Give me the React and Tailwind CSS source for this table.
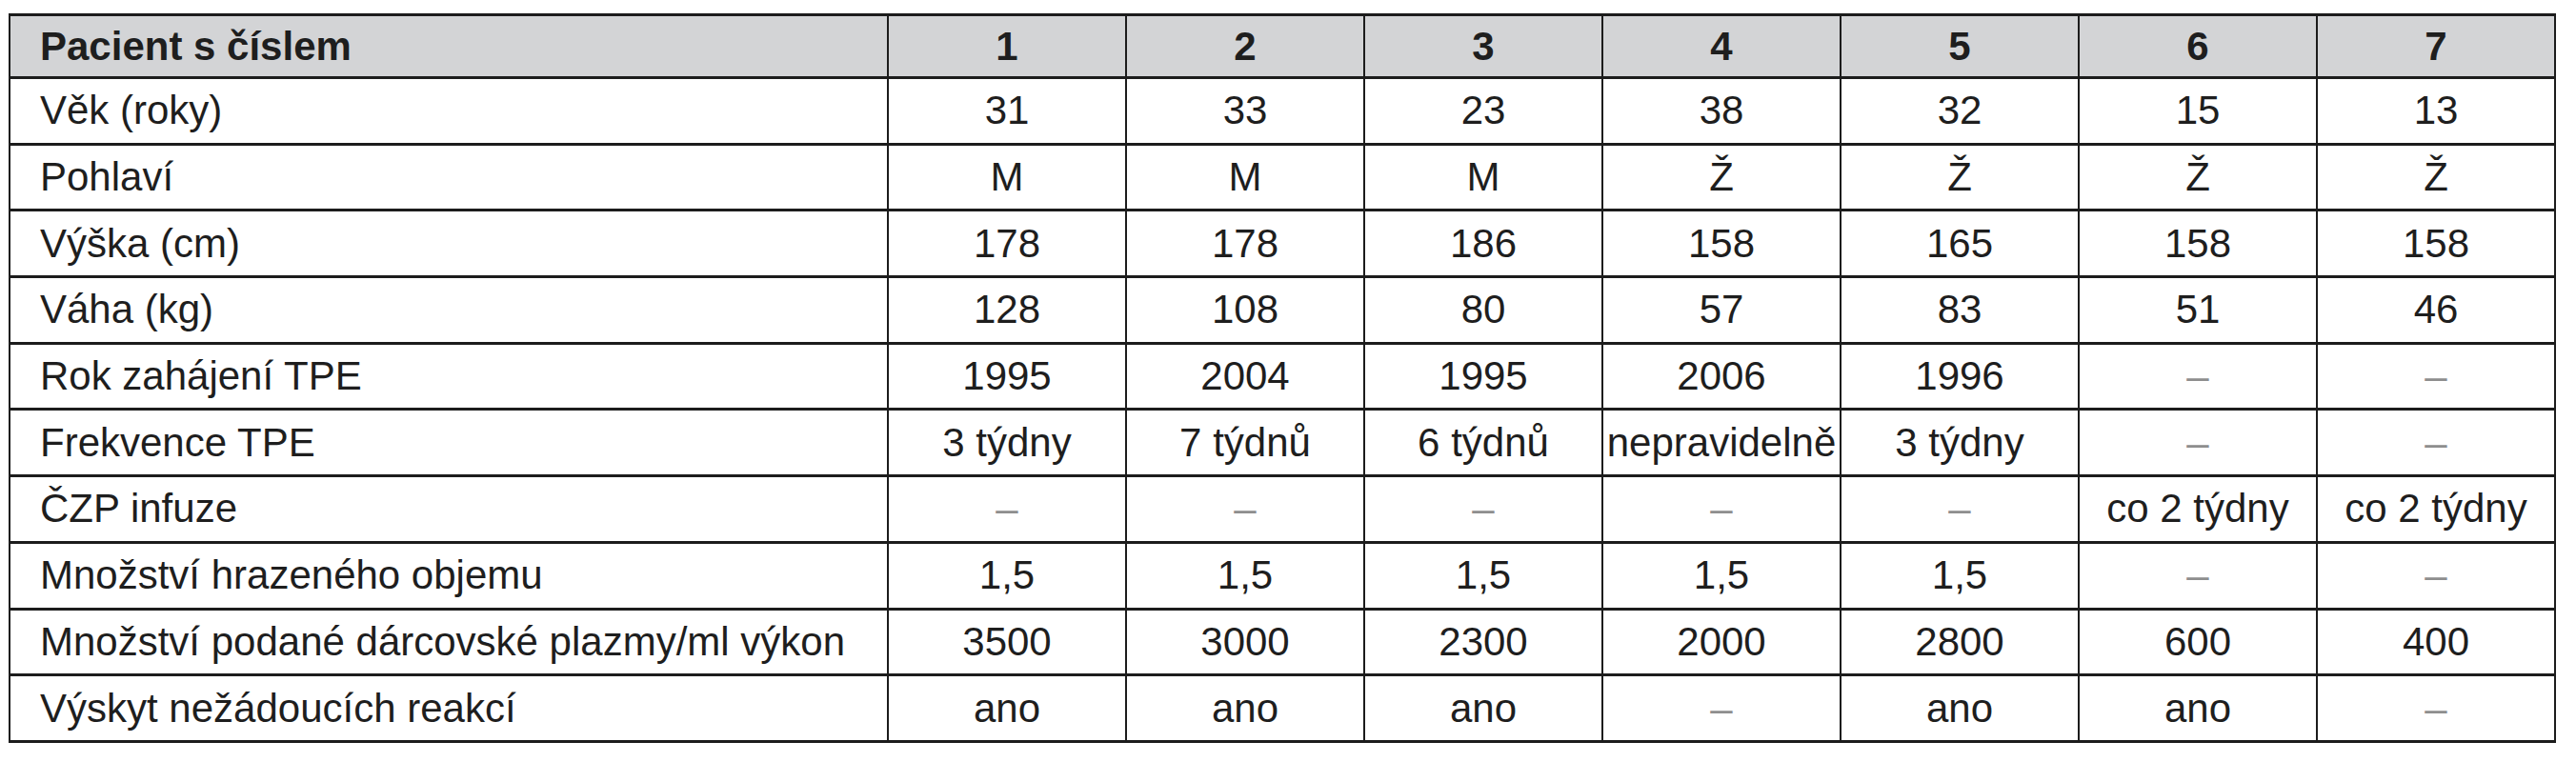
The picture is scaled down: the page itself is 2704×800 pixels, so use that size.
import React from "react";

const header = ["Pacient s číslem", "1", "2", "3", "4", "5", "6", "7"];

const rows = [
  ["Věk (roky)", "31", "33", "23", "38", "32", "15", "13"],
  ["Pohlaví", "M", "M", "M", "Ž", "Ž", "Ž", "Ž"],
  ["Výška (cm)", "178", "178", "186", "158", "165", "158", "158"],
  ["Váha (kg)", "128", "108", "80", "57", "83", "51", "46"],
  ["Rok zahájení TPE", "1995", "2004", "1995", "2006", "1996", "–", "–"],
  ["Frekvence TPE", "3 týdny", "7 týdnů", "6 týdnů", "nepravidelně", "3 týdny", "–", "–"],
  ["ČZP infuze", "–", "–", "–", "–", "–", "co 2 týdny", "co 2 týdny"],
  ["Množství hrazeného objemu", "1,5", "1,5", "1,5", "1,5", "1,5", "–", "–"],
  ["Množství podané dárcovské plazmy/ml výkon", "3500", "3000", "2300", "2000", "2800", "600", "400"],
  ["Výskyt nežádoucích reakcí", "ano", "ano", "ano", "–", "ano", "ano", "–"],
];

function Cell({ children, first, head }) {
  const isDash = children === "–";
  return (
    <div
      className={
        "flex items-center whitespace-nowrap border-r-2 border-b-[3px] border-[#1c1c1c] " +
        (head ? "h-[66px] bg-[#d3d4d6] font-bold " : "h-[69.7px] bg-white ") +
        (first ? "justify-start pl-[31px] " : "justify-center ") +
        (isDash ? "text-[#8e8e8e]" : "text-[#1e1e1e]")
      }
    >
      {children}
    </div>
  );
}

export default function App() {
  return (
    <div className="min-h-[800px] w-[2704px] bg-white pt-[14px] pl-[9px] font-['Liberation_Sans',Arial,sans-serif] text-[42px] leading-none">
      <div className="grid w-fit grid-cols-[922px_repeat(7,250px)] border-l-2 border-t-[3px] border-[#1c1c1c]">
        {header.map((h, i) => (
          <Cell key={"h" + i} first={i === 0} head>
            {h}
          </Cell>
        ))}
        {rows.map((r, ri) =>
          r.map((c, ci) => (
            <Cell key={ri + "-" + ci} first={ci === 0}>
              {c}
            </Cell>
          ))
        )}
      </div>
    </div>
  );
}
